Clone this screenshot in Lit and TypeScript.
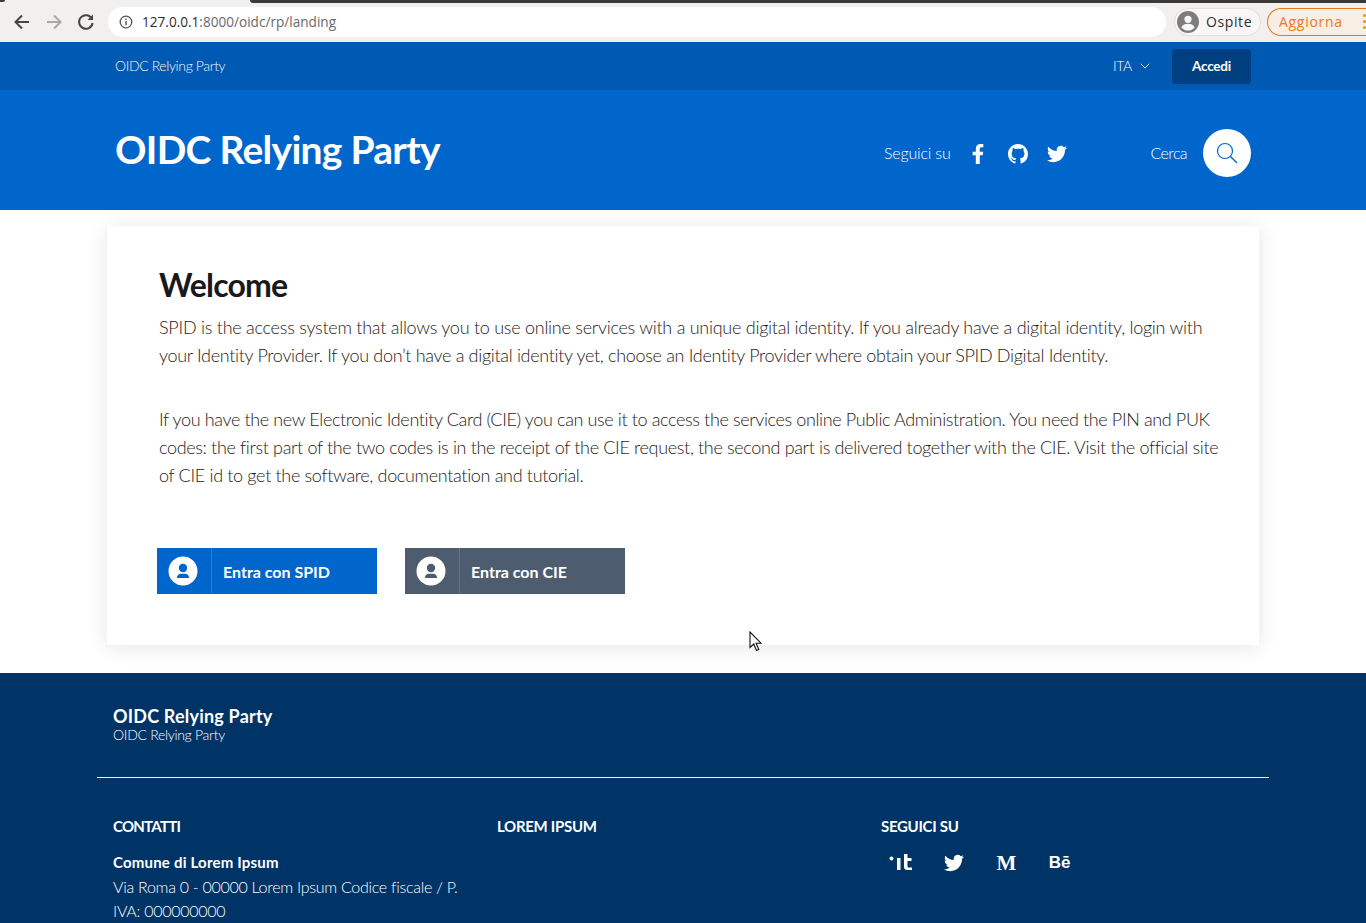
import { LitElement, html, css, svg } from 'lit';
import { customElement } from 'lit/decorators.js';
import { styleMap } from 'lit/directives/style-map.js';

const twitter = svg`<path d="M23.953 4.57a10 10 0 01-2.825.775 4.958 4.958 0 002.163-2.723c-.951.555-2.005.959-3.127 1.184a4.92 4.92 0 00-8.384 4.482C7.69 8.095 4.067 6.13 1.64 3.162a4.822 4.822 0 00-.666 2.475c0 1.71.87 3.213 2.188 4.096a4.904 4.904 0 01-2.228-.616v.06a4.923 4.923 0 003.946 4.827 4.996 4.996 0 01-2.212.085 4.936 4.936 0 004.604 3.417 9.867 9.867 0 01-6.102 2.105c-.39 0-.779-.023-1.17-.067a13.995 13.995 0 007.557 2.209c9.053 0 13.998-7.496 13.998-13.985 0-.21 0-.42-.015-.63A9.935 9.935 0 0024 4.59z"/>`;

const userCircle = html`<svg class="user-icon" viewBox="0 0 30 30">
  <circle cx="15" cy="15" r="14.5" fill="#fff"/>
  <circle cx="15" cy="12" r="4.2" class="glyph"/>
  <path d="M8.800 22c.3-3 2.200-4.200 4-4.200h4.400c1.800 0 3.700 1.200 4 4.200z" class="glyph"/>
</svg>`;

// each line has its own tracking so the wraps land where the reference has them
const intro = [
  { text: 'SPID is the access system that allows you to use online services with a unique digital identity. If you already have a digital identity, login with', ls: -0.26 },
  { text: 'your Identity Provider. If you don’t have a digital identity yet, choose an Identity Provider where obtain your SPID Digital Identity.', ls: -0.32 },
];
const cieInfo = [
  { text: 'If you have the new Electronic Identity Card (CIE) you can use it to access the services online Public Administration. You need the PIN and PUK', ls: -0.37 },
  { text: 'codes: the first part of the two codes is in the receipt of the CIE request, the second part is delivered together with the CIE. Visit the official site', ls: -0.345 },
  { text: 'of CIE id to get the software, documentation and tutorial.', ls: -0.33 },
];

@customElement('app-root')
export class AppRoot extends LitElement {
  static styles = css`
    :host {
      display: block;
      height: 923px;
      overflow: hidden;
      position: relative;
      font-family: "Lato", "Liberation Sans", sans-serif;
      color: #19191a;
      background: #fff;
    }

    /* browser chrome */
    .browser {
      height: 42px;
      background: #f1f0ee;
      display: flex;
      align-items: center;
      position: relative;
      font-family: "Open Sans", "Noto Sans", sans-serif;
      box-sizing: border-box;
      padding-top: 1px;
    }
    .tab-edge {
      position: absolute;
      top: 0;
      left: 250px;
      right: 0;
      height: 3px;
      background: #3b3a38;
      border-bottom-left-radius: 4px;
    }
    .tab-corner {
      position: absolute;
      top: 0;
      left: 0;
      width: 5px;
      height: 2px;
      background: #3b3a38;
      border-bottom-right-radius: 3px;
    }
    .nav-icon {
      width: 20px;
      height: 20px;
      flex: none;
      margin-left: 12px;
    }
    .nav-icon + .nav-icon { margin-left: 12px; }
    .omnibox {
      margin-left: 12px;
      width: 1058px;
      flex: none;
      height: 30px;
      border-radius: 15px;
      background: #fff;
      display: flex;
      align-items: center;
      font-size: 13.6px;
      color: #6a6a6a;
    }
    .omnibox svg { width: 14px; height: 14px; margin: 0 9px 0 11px; }
    .omnibox b { font-weight: 400; color: #2e2e2e; }
    .profile {
      margin-left: 8px;
      width: 87px;
      flex: none;
      height: 28px;
      border-radius: 14px;
      border: 1px solid #e2e0dd;
      box-sizing: border-box;
      background: #f8f7f6;
      display: flex;
      align-items: center;
      gap: 7px;
      padding-left: 2px;
      font-size: 14px;
      letter-spacing: 0.6px;
      color: #2e2e2e;
    }
    .profile svg { width: 22px; height: 22px; }
    .update {
      margin-left: 6px;
      width: 99px;
      height: 28px;
      border-radius: 14px 0 0 14px;
      border: 1px solid #e8791a;
      border-right: none;
      box-sizing: border-box;
      background: #f8eee4;
      display: flex;
      align-items: center;
      justify-content: space-between;
      padding: 0 0 0 11px;
      font-size: 14px;
      letter-spacing: 0.7px;
      color: #e8791a;
      flex: none;
    }
    .dots { display: grid; gap: 3px; }
    .dots i { width: 3px; height: 3px; border-radius: 50%; background: #e8921a; }

    /* header */
    .slim {
      height: 48px;
      background: #0059b3;
      display: flex;
      align-items: center;
      justify-content: space-between;
      padding: 0 115px;
      color: #fff;
      font-size: 14px;
    }
    .slim-title { opacity: 0.95; font-weight: 300; letter-spacing: -0.39px; padding-bottom: 1px; }
    .slim-right { display: flex; align-items: center; }
    .lang { display: flex; align-items: center; gap: 8px; font-weight: 300; letter-spacing: -0.3px; padding-bottom: 1px; }
    .lang svg { width: 10px; height: 6px; }
    .login {
      margin-left: 22px;
      width: 79px;
      height: 35px;
      border-radius: 4px;
      background: #004080;
      display: flex;
      align-items: center;
      justify-content: center;
      font-weight: 700;
      font-size: 13.5px;
      letter-spacing: -0.2px;
    }
    .main-head {
      height: 120px;
      background: #0066cc;
      display: flex;
      align-items: center;
      padding: 0 115px;
      color: #fff;
    }
    .brand {
      font-size: 39px;
      font-weight: 700;
      letter-spacing: -0.72px;
      flex: 1;
      padding-bottom: 2px;
    }
    .follow {
      display: flex;
      align-items: center;
      font-size: 16px;
      font-weight: 300;
      letter-spacing: -0.2px;
      padding-top: 4px;
    }
    .follow .ico { width: 20px; height: 20px; fill: #fff; margin: 4px 0 0 20px; display: block; }
    .follow .ico.fb { margin-left: 18px; }
    .follow .ico.tw { margin-left: 19px; }
    .search {
      display: flex;
      align-items: center;
      margin-left: 83px;
      font-size: 16px;
      font-weight: 300;
      letter-spacing: -0.6px;
      gap: 16px;
      padding-top: 4px;
    }
    .search-btn {
      width: 48px;
      height: 48px;
      margin-top: 2px;
      border-radius: 50%;
      background: #fff;
      display: flex;
      align-items: center;
      justify-content: center;
    }
    .search-btn svg { width: 22px; height: 22px; }

    /* card */
    .card-wrap { padding: 16px 107px 28px; }
    .card {
      height: 419px;
      box-sizing: border-box;
      padding: 39px 40px 0 52px;
      background: #fff;
      box-shadow: 0 2px 20px rgba(0, 0, 0, 0.1);
    }
    h1 {
      margin: 0;
      font-size: 32px;
      line-height: 40px;
      font-weight: 700;
      letter-spacing: -0.85px;
    }
    p.lead {
      margin: 0 0 36px;
      font-size: 18px;
      line-height: 28px;
      font-weight: 300;
      color: #1f1a1a;
      white-space: nowrap;
    }
    p.lead span { display: block; }
    h1 + p.lead { margin-top: 8px; }
    .actions { display: flex; gap: 28px; margin: 59px 0 0 -2px; }
    .enter {
      width: 220px;
      height: 46px;
      background: #0066cc;
      color: #fff;
      display: flex;
      align-items: center;
      font-size: 16px;
      font-weight: 700;
    }
    .enter.cie { background: #4d5c6e; }
    .enter .slot {
      width: 55px;
      height: 100%;
      flex: none;
      display: flex;
      align-items: center;
      justify-content: center;
      padding-right: 2px;
      border-right: 1px solid rgba(255, 255, 255, 0.15);
      box-sizing: border-box;
    }
    .user-icon { width: 30px; height: 30px; }
    .enter .glyph { fill: #0066cc; }
    .enter.cie .glyph { fill: #4d5c6e; }
    .enter .label { padding-left: 11px; }

    /* footer */
    .footer {
      background: #003366;
      color: #fff;
      height: 250px;
      padding: 0 97px;
    }
    .foot-brand {
      padding: 32px 16px 0;
      height: 72px;
      border-bottom: 1px solid #e8f0f8;
    }
    .foot-title { font-size: 18px; font-weight: 700; line-height: 22px; letter-spacing: 0.2px; }
    .foot-sub { font-size: 14px; line-height: 14px; font-weight: 300; letter-spacing: -0.3px; padding-top: 1px; }
    .cols { display: grid; grid-template-columns: repeat(3, 384px); padding-top: 39px; }
    .col { padding-left: 16px; }
    .col h4 {
      margin: 0;
      font-size: 15px;
      line-height: 18px;
      font-weight: 700;
      letter-spacing: -0.3px;
    }
    .col h4.tight { letter-spacing: -0.75px; }
    .addr { font-size: 16px; line-height: 24px; font-weight: 300; letter-spacing: -0.28px; margin-top: 15px; white-space: nowrap; }
    .addr b { font-weight: 700; font-size: 15px; letter-spacing: 0.2px; }
    .addr span { display: block; margin-top: 1px; }
    .socials { display: flex; align-items: center; margin-top: 16px; height: 24px; }
    .socials > * { width: 53px; display: flex; justify-content: center; margin-left: -7px; margin-right: 7px; }
    .socials svg { width: 20px; height: 20px; fill: #fff; }
    .socials .it { width: 24px; height: 18px; }
    .medium { font-family: "Liberation Serif", serif; font-weight: 700; font-size: 21px; }
    .behance { font-family: "Liberation Sans", sans-serif; font-weight: 700; font-size: 17px; }
    .col h4.news { margin-top: 67px; }

    .cursor { position: absolute; left: 749px; top: 631px; width: 14px; height: 21px; }
  `;

  private lines(list: { text: string; ls: number }[]) {
    return list.map((l) => html`<span style=${styleMap({ letterSpacing: `${l.ls}px` })}>${l.text}</span>`);
  }

  render() {
    return html`
      <div class="browser">
        <div class="tab-corner"></div>
        <div class="tab-edge"></div>
        <svg class="nav-icon" viewBox="0 0 20 20" fill="none" stroke="#454545" stroke-width="2"><path d="M17 10H4M10 3.5 3.5 10l6.500 6.500"/></svg>
        <svg class="nav-icon" viewBox="0 0 20 20" fill="none" stroke="#a9a9a9" stroke-width="2"><path d="M3 10h13M10 3.500l6.500 6.500-6.500 6.500"/></svg>
        <svg class="nav-icon" viewBox="0 0 20 20" fill="none" stroke="#454545" stroke-width="2"><path d="M16 7a6.800 6.800 0 1 0 .6 4"/><path d="M17 2.500V8h-5.500" fill="#454545" stroke="none"/></svg>
        <div class="omnibox">
          <svg viewBox="0 0 14 14" fill="none" stroke="#555"><circle cx="7" cy="7" r="5.800" stroke-width="1.300"/><path d="M7 6v4.200M7 3.600v1.400" stroke-width="1.400"/></svg>
          <span><b>127.0.0.1</b>:8000/oidc/rp/landing</span>
        </div>
        <div class="profile">
          <svg viewBox="0 0 22 22"><circle cx="11" cy="11" r="11" fill="#7d7d7d"/><circle cx="11" cy="8.300" r="3.600" fill="#f8f7f6"/><path d="M4.400 16.400c1-2.600 3.800-3.600 6.600-3.600s5.600 1 6.600 3.600a8.600 8.600 0 0 1-13.200 0z" fill="#f8f7f6"/></svg>
          Ospite
        </div>
        <div class="update">Aggiorna <span class="dots"><i></i><i></i><i></i></span></div>
      </div>

      <header>
        <div class="slim">
          <span class="slim-title">OIDC Relying Party</span>
          <div class="slim-right">
            <span class="lang">ITA
              <svg viewBox="0 0 10 6" fill="none" stroke="#cfe0f5"><path d="M.8.8 5 5l4.200-4.200"/></svg>
            </span>
            <span class="login">Accedi</span>
          </div>
        </div>
        <div class="main-head">
          <div class="brand">OIDC Relying Party</div>
          <div class="follow">
            Seguici su
            <svg class="ico fb" viewBox="0 0 320 512"><path d="M279.14 288l14.22-92.66h-88.91v-60.13c0-25.35 12.42-50.06 52.24-50.06h40.42V6.26S260.43 0 225.36 0c-73.22 0-121.08 44.38-121.08 124.72v70.62H22.89V288h81.39v224h100.17V288z"/></svg>
            <svg class="ico" viewBox="0 0 16 16"><path d="M8 0C3.58 0 0 3.58 0 8c0 3.54 2.29 6.53 5.47 7.59.4.07.55-.17.55-.38 0-.19-.01-.82-.01-1.49-2.01.37-2.53-.49-2.69-.94-.09-.23-.48-.94-.82-1.13-.28-.15-.68-.52-.01-.53.63-.01 1.08.58 1.23.82.72 1.21 1.87.87 2.33.66.07-.52.28-.87.51-1.07-1.78-.2-3.64-.89-3.64-3.95 0-.87.31-1.59.82-2.15-.08-.2-.36-1.02.08-2.12 0 0 .67-.21 2.2.82.64-.18 1.32-.27 2-.27.68 0 1.36.09 2 .27 1.53-1.04 2.2-.82 2.2-.82.44 1.1.16 1.92.08 2.12.51.56.82 1.27.82 2.15 0 3.07-1.87 3.75-3.65 3.95.29.25.54.73.54 1.48 0 1.07-.01 1.93-.01 2.2 0 .21.15.46.55.38A8.013 8.013 0 0016 8c0-4.42-3.58-8-8-8z"/></svg>
            <svg class="ico tw" viewBox="0 0 24 24">${twitter}</svg>
          </div>
          <div class="search">
            Cerca
            <span class="search-btn">
              <svg viewBox="0 0 22 22" fill="none" stroke="#0066cc" stroke-width="1.2"><circle cx="9" cy="9" r="7.500"/><path d="m14.500 14.500 6.500 6.500" stroke-width="1.400"/></svg>
            </span>
          </div>
        </div>
      </header>

      <div class="card-wrap">
        <main class="card">
          <h1>Welcome</h1>
          <p class="lead">${this.lines(intro)}</p>
          <p class="lead">${this.lines(cieInfo)}</p>
          <div class="actions">
            <a class="enter"><span class="slot">${userCircle}</span><span class="label">Entra con SPID</span></a>
            <a class="enter cie"><span class="slot">${userCircle}</span><span class="label">Entra con CIE</span></a>
          </div>
        </main>
      </div>

      <footer class="footer">
        <div class="foot-brand">
          <div class="foot-title">OIDC Relying Party</div>
          <div class="foot-sub">OIDC Relying Party</div>
        </div>
        <div class="cols">
          <div class="col">
            <h4 class="tight">CONTATTI</h4>
            <div class="addr"><b>Comune di Lorem Ipsum</b><span>Via Roma 0 - 00000 Lorem Ipsum Codice fiscale / P.<br>IVA: 000000000</span></div>
          </div>
          <div class="col"><h4>LOREM IPSUM</h4></div>
          <div class="col">
            <h4>SEGUICI SU</h4>
            <div class="socials">
              <span><svg class="it" viewBox="0 0 24 18"><circle cx="2.500" cy="4.500" r="2"/><rect x="8" y="4" width="3.500" height="12"/><path d="M15 0h3.500v4h4v3h-4v5.500c0 .8.400 1 1.200 1H23V16h-4.500c-2.300 0-3.500-1-3.500-3.300z"/></svg></span>
              <span><svg viewBox="0 0 24 24">${twitter}</svg></span>
              <span class="medium">M</span>
              <span class="behance">Bē</span>
            </div>
            <h4 class="news">NEWSLETTER</h4>
          </div>
        </div>
      </footer>

      <svg class="cursor" viewBox="0 0 14 21"><path d="M1 1v15.500l3.800-3.500 2.700 6.500 2.300-1-2.700-6.300H12z" fill="#fff" stroke="#111" stroke-width="1.100"/></svg>
    `;
  }
}
